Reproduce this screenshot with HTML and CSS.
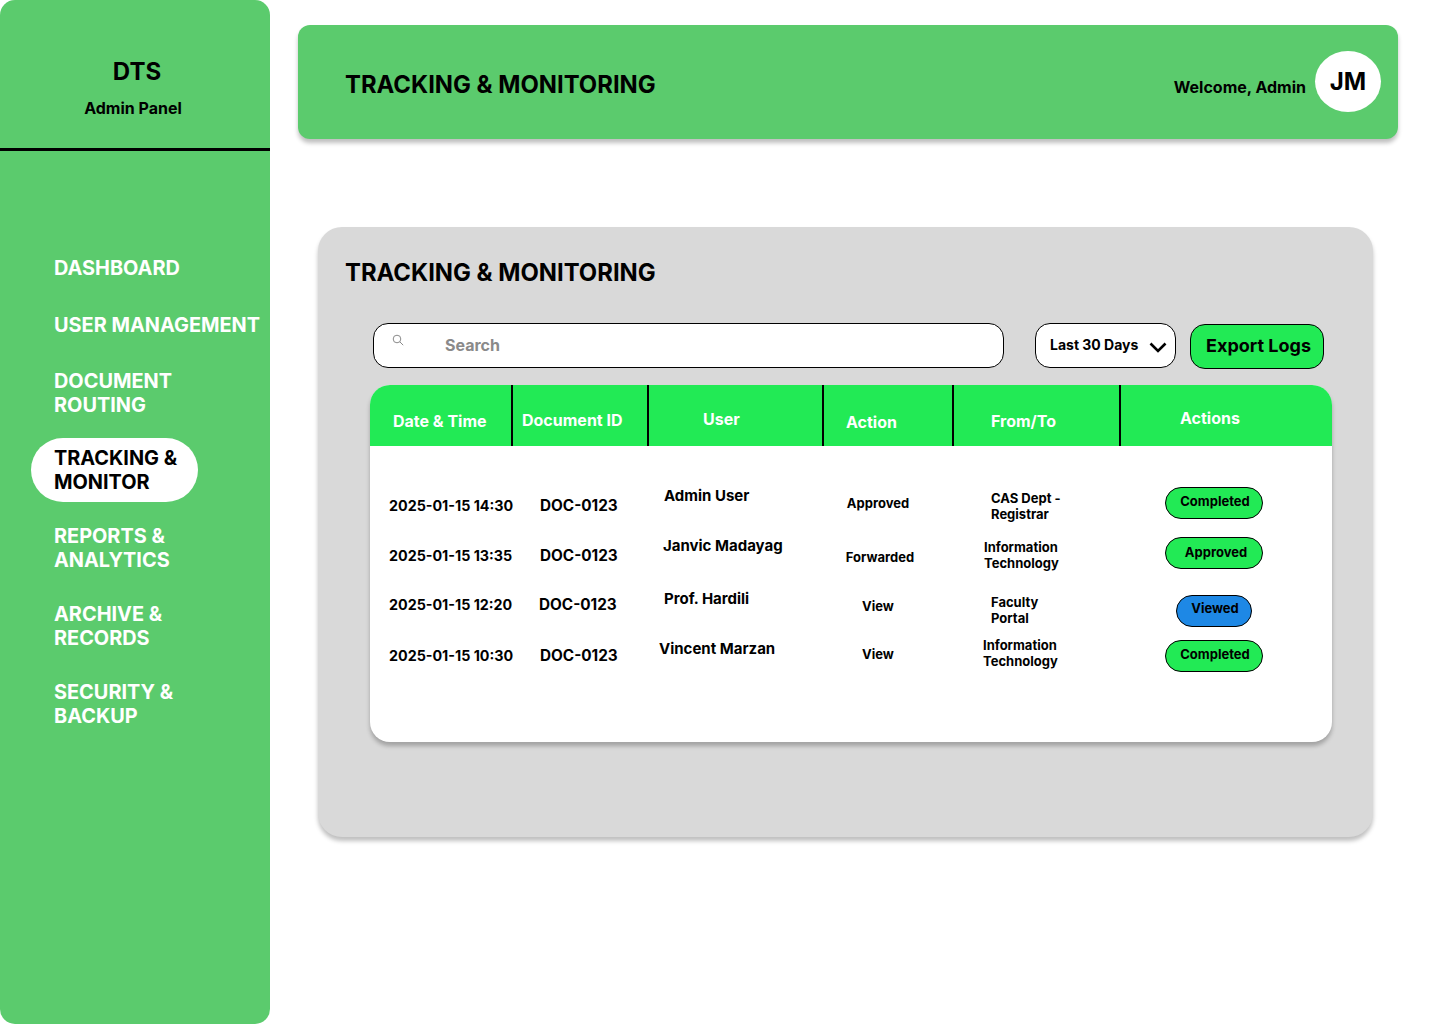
FILE: index.html
```html
<!DOCTYPE html>
<html lang="en">
<head>
<meta charset="utf-8">
<title>Tracking &amp; Monitoring</title>
<link rel="stylesheet" href="styles.css">
</head>
<body>
<div class="app">
  <aside class="sidebar">
    <div class="brand">
      <div class="brand-name">DTS</div>
      <div class="brand-sub">Admin Panel</div>
    </div>
    <nav class="nav">
      <a class="nav-item">DASHBOARD</a>
      <a class="nav-item gap-17">USER MANAGEMENT</a>
      <a class="nav-item gap-16">DOCUMENT<br>ROUTING</a>
      <a class="nav-item active gap-13">TRACKING &amp;<br>MONITOR</a>
      <a class="nav-item gap-14">REPORTS &amp;<br>ANALYTICS</a>
      <a class="nav-item gap-14">ARCHIVE &amp;<br>RECORDS</a>
      <a class="nav-item gap-14">SECURITY &amp;<br>BACKUP</a>
    </nav>
  </aside>
  <main class="main">
    <header class="topbar">
      <h1 class="title">TRACKING &amp; MONITORING</h1>
      <div class="user">
        <span class="welcome">Welcome, Admin</span>
        <span class="avatar">JM</span>
      </div>
    </header>
    <section class="panel">
      <h2 class="title panel-title">TRACKING &amp; MONITORING</h2>
      <div class="toolbar">
        <label class="search">
          <svg class="search-icon" viewBox="0 0 12 12" width="12" height="12" fill="none" stroke="#8a8a8a" stroke-width="1"><circle cx="5" cy="5" r="3.8"/><path d="M7.8 7.8 11.2 11.2"/></svg>
          <span class="search-text">Search</span>
        </label>
        <div class="select">
          <span class="select-text">Last 30 Days</span>
          <svg class="chevron" viewBox="0 0 18 11" width="18" height="11" fill="none" stroke="#000" stroke-width="2.6"><path d="M1.5 1.5 9 9l7.5-7.5"/></svg>
        </div>
        <button class="export">Export Logs</button>
      </div>
      <div class="table">
        <div class="thead">
          <div class="th p1">Date &amp; Time</div>
          <div class="th p2">Document ID</div>
          <div class="th p3">User</div>
          <div class="th p4">Action</div>
          <div class="th p5">From/To</div>
          <div class="th p6">Actions</div>
        </div>
        <div class="tbody">
          <div class="row h50">
            <div class="date t10">2025-01-15 14:30</div>
            <div class="doc t10 l1">DOC-0123</div>
            <div class="name l5">Admin User</div>
            <div class="act t8">Approved</div>
            <div class="from t3 l8">CAS Dept -<br>Registrar</div>
            <div class="pill green">Completed</div>
          </div>
          <div class="row h53">
            <div class="date t10">2025-01-15 13:35</div>
            <div class="doc t10 l1">DOC-0123</div>
            <div class="name l4">Janvic Madayag</div>
            <div class="act t12 l2">Forwarded</div>
            <div class="from t2 l1">Information<br>Technology</div>
            <div class="pill green nudge">Approved</div>
          </div>
          <div class="row h48">
            <div class="date t6">2025-01-15 12:20</div>
            <div class="doc t6">DOC-0123</div>
            <div class="name l5">Prof. Hardili</div>
            <div class="act t8">View</div>
            <div class="from t4 l8">Faculty<br>Portal</div>
            <div class="pill blue t5">Viewed</div>
          </div>
          <div class="row h48">
            <div class="date t9">2025-01-15 10:30</div>
            <div class="doc t9 l1">DOC-0123</div>
            <div class="name t2">Vincent Marzan</div>
            <div class="act t8">View</div>
            <div class="from up1">Information<br>Technology</div>
            <div class="pill green t2">Completed</div>
          </div>
        </div>
      </div>
    </section>
  </main>
</div>
</body>
</html>
```
FILE: styles.css
```css
* { box-sizing: border-box; }
html, body { margin: 0; padding: 0; }
body {
  background: #fff;
  color: #000;
  font-family: Inter, "Liberation Sans", sans-serif;
  font-weight: 650;
}
.app { display: flex; width: 1440px; height: 1024px; overflow: hidden; }

/* Sidebar */
.sidebar {
  flex: 0 0 270px;
  min-width: 0;
  height: 1024px;
  background: #5bcb6d;
  border-radius: 15px;
}
.brand {
  height: 151px;
  padding-top: 56px;
  border-bottom: 3px solid #000;
}
.brand-name { font-size: 24px; line-height: 31px; text-align: center; padding-left: 4px; }
.brand-sub { font-size: 16px; line-height: 20px; margin-top: 11px; text-align: center; padding-right: 4px; }
.nav { display: flex; flex-direction: column; align-items: flex-start; padding: 97px 0 0 31px; }
.nav-item {
  display: block;
  padding: 8px 21px 8px 23px;
  font-size: 19.9px;
  line-height: 24px;
  color: #fff;
  white-space: nowrap;
}
.nav-item.active { background: #fff; color: #000; border-radius: 32px; }
.gap-17 { margin-top: 17px; }
.gap-16 { margin-top: 16px; }
.gap-14 { margin-top: 14px; }
.gap-13 { margin-top: 13px; }

/* Main */
.main { flex: 1; min-width: 0; padding: 25px 0 0 28px; }
.topbar {
  width: 1100px;
  height: 114px;
  padding: 0 17px 0 47px;
  display: flex;
  justify-content: space-between;
  background: #5bcb6d;
  border-radius: 12px;
  box-shadow: 0 4px 4px rgba(0, 0, 0, .25);
}
.title { margin: 0; font-size: 23.85px; line-height: 30px; font-weight: 650; white-space: nowrap; }
.topbar .title { padding-top: 45px; }
.user { display: flex; align-items: flex-start; gap: 9px; padding-top: 26px; }
.welcome { font-size: 16px; line-height: 20px; margin-top: 26px; }
.avatar {
  width: 66px;
  height: 61px;
  border-radius: 50%;
  background: #fff;
  display: flex;
  align-items: center;
  justify-content: center;
  font-size: 24px;
}

/* Panel */
.panel {
  width: 1055px;
  height: 610px;
  margin: 88px 0 0 20px;
  padding: 31px 41px 0 52px;
  background: #d9d9d9;
  border-radius: 24px;
  box-shadow: 0 4px 4px rgba(0, 0, 0, .25);
}
.panel-title { margin-left: -25px; }
.toolbar { display: flex; align-items: flex-start; margin-top: 35px; padding-left: 3px; }
.search {
  width: 631px;
  height: 45px;
  display: flex;
  align-items: center;
  background: #fff;
  border: 1px solid #000;
  border-radius: 15px;
  padding-left: 18px;
}
.search-icon { flex: none; margin-top: -12px; }
.search-text { margin-left: 41px; font-size: 16px; color: #8a8a8a; padding-bottom: 1px; }
.select {
  width: 141px;
  height: 45px;
  margin-left: 31px;
  padding: 0 8px 0 14px;
  display: flex;
  align-items: center;
  justify-content: space-between;
  background: #fff;
  border: 1px solid #000;
  border-radius: 15px;
  font-size: 14px;
}
.select-text { padding-bottom: 2px; }
.chevron { margin-top: 4px; }
.export {
  width: 134px;
  height: 45px;
  margin: 1px 0 0 14px;
  padding: 0 0 2px 3px;
  background: #22ea55;
  border: 1px solid #000;
  border-radius: 15px;
  font: inherit;
  font-size: 18px;
  color: #000;
}

/* Table */
.table {
  width: 962px;
  height: 357px;
  margin-top: 16px;
  background: #fff;
  border-radius: 20px;
  box-shadow: 0 4px 4px rgba(0, 0, 0, .25);
  overflow: hidden;
}
.thead {
  display: grid;
  grid-template-columns: 143px 136px 175px 130px 167px 211px;
  height: 61px;
  background: #22ea55;
  color: #fff;
  font-size: 16px;
  line-height: 20px;
}
.th { border-right: 2.5px solid #000; }
.th:last-child { border-right: 0; }
.p1 { padding: 26px 0 0 23px; }
.p2 { padding: 25px 0 0 9px; }
.p3 { padding: 24px 0 0 54px; }
.p4 { padding: 27px 0 0 22px; }
.p5 { padding: 26px 0 0 37px; }
.p6 { padding: 23px 0 0 59px; }
.tbody { padding: 41px 0 0 19px; }
.row {
  display: grid;
  grid-template-columns: 150px 120px 159px 165px 160px 142px;
  align-items: start;
}
.h50 { height: 50px; }
.h53 { height: 53px; }
.h48 { height: 48px; }
.date { font-size: 14.3px; line-height: 18px; white-space: nowrap; }
.doc { font-size: 15.3px; line-height: 18px; white-space: nowrap; }
.name { font-size: 15px; line-height: 18px; white-space: nowrap; }
.act { width: 120px; font-size: 13px; line-height: 16px; text-align: center; }
.from { font-size: 13px; line-height: 16px; }
.pill {
  justify-self: center;
  width: 98px;
  height: 32px;
  display: flex;
  align-items: center;
  justify-content: center;
  border: 1px solid #000;
  border-radius: 16px;
  font-size: 13px;
  padding: 0 0 5px 2px;
}
.green { background: #22ea55; }
.blue { background: #1e88e5; width: 76px; padding: 0 0 7px 2px; }
.nudge { padding: 0 0 3px 4px; }
.up1 { margin-top: -1px; }
.t2 { margin-top: 2px; }
.t3 { margin-top: 3px; }
.t4 { margin-top: 4px; }
.t5 { margin-top: 5px; }
.t6 { margin-top: 6px; }
.t8 { margin-top: 8px; }
.t9 { margin-top: 9px; }
.t10 { margin-top: 10px; }
.t12 { margin-top: 12px; }
.l1 { margin-left: 1px; }
.l2 { margin-left: 2px; }
.l4 { margin-left: 4px; }
.l5 { margin-left: 5px; }
.l8 { margin-left: 8px; }
```
